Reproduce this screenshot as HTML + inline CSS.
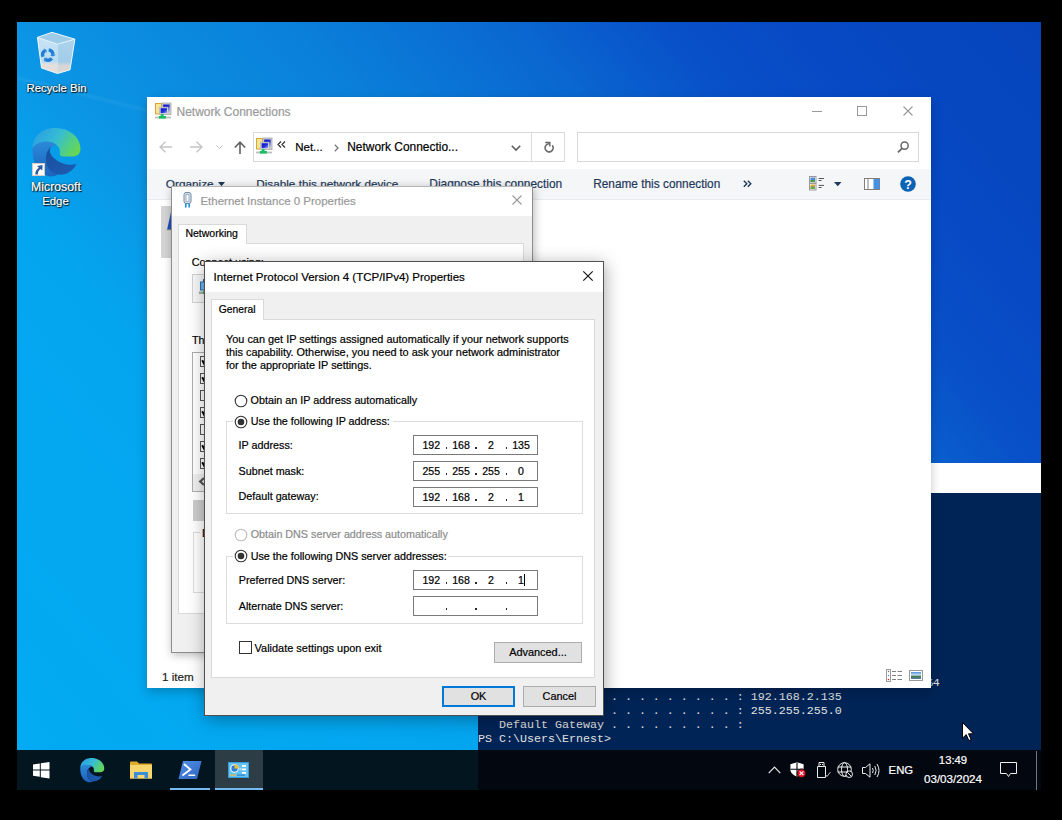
<!DOCTYPE html>
<html><head><meta charset="utf-8">
<style>
*{box-sizing:border-box;margin:0;padding:0}
html,body{width:1062px;height:820px;overflow:hidden;background:#000}
body{position:relative;font-family:"Liberation Sans",sans-serif;color:#000}
.a{position:absolute}
svg.a{overflow:visible}
.t{position:absolute;white-space:pre;line-height:1;-webkit-text-stroke:0.2px currentColor}
.dt{color:#fff;text-shadow:0 1px 2px #000,0 0 1px #000}
</style></head><body>
<div class="a" style="left:17px;top:22px;width:1024px;height:728px;overflow:hidden;background:linear-gradient(50deg,#02abf2 0%,#04a5ef 28%,#0b95e4 37%,#0a80da 54%,#0a66d0 68%,#0850c8 77%,#0749c4 85%,#0544ba 100%)"></div>
<svg class="a" style="left:17px;top:22px;overflow:hidden" width="200" height="120" viewBox="0 0 200 120"><defs><filter id="bl"><feGaussianBlur stdDeviation="1.2"/></filter></defs><path d="M0 56 L200 106" stroke="rgba(190,235,255,0.09)" stroke-width="2.5" filter="url(#bl)"/></svg>
<svg class="a" style="left:36px;top:31px;" width="42" height="44" viewBox="0 0 42 44">
<defs><linearGradient id="rbl" x1="0" y1="0" x2="0" y2="1"><stop offset="0" stop-color="#c9e4f5"/><stop offset="0.66" stop-color="#b9dbf1"/><stop offset="0.76" stop-color="#e2e0de"/><stop offset="1" stop-color="#e9ddd6"/></linearGradient>
<linearGradient id="rbr" x1="0" y1="0" x2="0" y2="1"><stop offset="0" stop-color="#acd3ec"/><stop offset="0.66" stop-color="#a2cce8"/><stop offset="0.76" stop-color="#d6d6d8"/><stop offset="1" stop-color="#e0d6d0"/></linearGradient></defs>
<path d="M1.4 6.4 L21.5 13.2 L21.5 42.5 L5.5 37Z" fill="url(#rbl)"/>
<path d="M21.5 13.2 L38.9 8.2 L34 38.8 L21.5 42.5Z" fill="url(#rbr)"/>
<path d="M1.4 6.4 L16 1.3 L38.9 8.2 L21.5 13.2Z" fill="#9dcbe8"/>
<path d="M1.4 6.4 L16 1.3 L38.9 8.2 L21.5 13.2Z M1.4 6.4 L5.5 37 L21.5 42.5 L34 38.8 L38.9 8.2 " fill="none" stroke="#eef7fc" stroke-width="1" stroke-linejoin="round"/><path d="M21.5 13.5 V42" stroke="#e4f1fa" stroke-width="0.6"/>
<g transform="translate(11.8 24) scale(1.12)"><path d="M0.80 -4.53 A4.6 4.6 0 0 1 4.60 -0.16" fill="none" stroke="#1f7fd8" stroke-width="3"/><path d="M3.52 2.96 A4.6 4.6 0 0 1 -2.16 4.06" fill="none" stroke="#1f7fd8" stroke-width="3"/><path d="M-4.32 1.57 A4.6 4.6 0 0 1 -2.44 -3.90" fill="none" stroke="#1f7fd8" stroke-width="3"/><path d="M7.20 -0.25 L4.42 1.27 L2.00 -0.07Z" fill="#1f7fd8"/><path d="M-3.38 6.36 L-3.31 3.20 L-0.94 1.77Z" fill="#1f7fd8"/><path d="M-3.82 -6.11 L-1.11 -4.46 L-1.06 -1.70Z" fill="#1f7fd8"/></g>
</svg>
<div class="t" style="left:-43.5px;width:200px;text-align:center;top:83.00px;font-size:11.4px;color:#fff;text-shadow:0 0 2px #000,1px 1px 1px rgba(0,0,0,.9)">Recycle Bin</div>
<svg class="a" style="left:30px;top:126px;" width="52" height="52" viewBox="0 0 52 52">
<defs>
<linearGradient id="eg1" x1="0" y1="0.3" x2="1" y2="0.7"><stop offset="0" stop-color="#2b9fe2"/><stop offset="0.45" stop-color="#35bcd4"/><stop offset="0.8" stop-color="#55d07c"/><stop offset="1" stop-color="#6ad650"/></linearGradient>
<linearGradient id="eg2" x1="0" y1="0" x2="0" y2="1"><stop offset="0" stop-color="#2c8ad8"/><stop offset="1" stop-color="#1b63bd"/></linearGradient>
<linearGradient id="eg3" x1="0" y1="0" x2="1" y2="1"><stop offset="0" stop-color="#1a4f9e"/><stop offset="1" stop-color="#1d5cb2"/></linearGradient>
</defs>
<path d="M2.5 22 C3 9 13 2 25.5 2 C39 2 50.5 11 50.5 23 C50.5 28 47 30.5 42 30.5 L33 30.5 C30.5 30.5 29.5 29 29.8 27.5 C30.5 24 29 20.5 26 18.5 C20 14 8 15 2.5 22 Z" fill="url(#eg1)"/>
<path d="M2.5 22 C8 14.5 20 13.5 26 18.5 L21.9 20.6 C17 23 15.5 29 15.9 35.5 C16.5 42 21 47 28.5 48.6 C25 50.2 22.5 50.8 20 50.5 C9 48.5 2 38 2.5 22 Z" fill="url(#eg2)"/>
<path d="M21.9 20.6 C17 23 15.5 29 15.9 35.5 C16.5 42 21 47.5 28.5 48.6 C36 49.5 43 45 46.6 37.7 C43 39 39 39 37 38.5 C29 37 22 32 20 26.5 C19.3 24 20 22 21.9 20.6 Z" fill="url(#eg3)"/>
</svg>
<div class="a" style="left:32px;top:163px;width:13px;height:13px;background:#fff;border:1px solid #d8cbbd"></div>
<svg class="a" style="left:33px;top:164px;" width="11" height="11" viewBox="0 0 11 11"><path d="M2.3 10.6 C2.2 7.2 3.6 5 5.9 3.7 L4 1.9 L9.6 1 L9.3 6.6 L7.5 4.9 C5.9 6 4.7 7.8 4.9 10.6 Z" fill="#2b5aa0"/></svg>
<div class="t" style="left:-44px;width:200px;text-align:center;top:181.00px;font-size:12.3px;color:#fff;text-shadow:0 0 2px #000,1px 1px 1px rgba(0,0,0,.9)">Microsoft</div>
<div class="t" style="left:-44.5px;width:200px;text-align:center;top:196.00px;font-size:11.4px;color:#fff;text-shadow:0 0 2px #000,1px 1px 1px rgba(0,0,0,.9)">Edge</div>
<div class="a" style="left:478px;top:463px;width:563px;height:30px;background:#fff"></div>
<div class="a" style="left:478px;top:493px;width:563px;height:257px;background:#012456"></div>
<div class="t" style="left:478px;top:677.62px;font-family:'Liberation Mono',monospace;font-size:11.67px;color:#e0e0e0;-webkit-text-stroke:0">   Link-local IPv6 Address . . . . . : fe80::c1d2:e3f4:a5b6:c7d8%4</div>
<div class="t" style="left:478px;top:691.62px;font-family:'Liberation Mono',monospace;font-size:11.67px;color:#e0e0e0;-webkit-text-stroke:0">   IPv4 Address. . . . . . . . . . . : 192.168.2.135</div>
<div class="t" style="left:478px;top:705.62px;font-family:'Liberation Mono',monospace;font-size:11.67px;color:#e0e0e0;-webkit-text-stroke:0">   Subnet Mask . . . . . . . . . . . : 255.255.255.0</div>
<div class="t" style="left:478px;top:719.62px;font-family:'Liberation Mono',monospace;font-size:11.67px;color:#e0e0e0;-webkit-text-stroke:0">   Default Gateway . . . . . . . . . :</div>
<div class="t" style="left:478px;top:733.62px;font-family:'Liberation Mono',monospace;font-size:11.67px;color:#e0e0e0;-webkit-text-stroke:0">PS C:\Users\Ernest&gt;</div>
<div class="a" style="left:147px;top:97px;width:784px;height:591px;background:#fff;box-shadow:0 4px 10px rgba(0,0,0,.22)"></div>
<svg class="a" style="left:155px;top:103px;" width="16" height="16" viewBox="0 0 16 16">
<defs><linearGradient id="scr" x1="0" y1="0" x2="1" y2="1"><stop offset="0" stop-color="#0a10c8"/><stop offset="0.55" stop-color="#2030d8"/><stop offset="1" stop-color="#a8b8f0"/></linearGradient></defs>
<rect x="0.5" y="0.5" width="6" height="10.5" fill="#f7e596" stroke="#d4a738" stroke-width="1"/>
<rect x="7" y="0" width="9" height="11.5" fill="#cfcfcf" stroke="#a8a8a8" stroke-width="0.8"/>
<rect x="8.2" y="1.5" width="6.5" height="7" fill="url(#scr)"/>
<rect x="4.6" y="4.2" width="8.4" height="7" fill="#e6e6e6" stroke="#b5b5b5" stroke-width="0.8"/>
<rect x="5.6" y="5.2" width="6.4" height="5" fill="url(#scr)"/>
<rect x="0" y="13.6" width="16" height="1.8" fill="#bdbdbd"/>
<rect x="5.6" y="11.2" width="3" height="2.4" fill="#14c064"/>
<rect x="3.9" y="13" width="7" height="2.6" fill="#14c064"/>
</svg>
<div class="t" style="left:176.5px;top:106.00px;font-size:12px;color:#999;">Network Connections</div>
<div class="a" style="left:812px;top:111px;width:10px;height:1px;background:#999"></div>
<div class="a" style="left:857px;top:106px;width:10px;height:10px;border:1px solid #999"></div>
<svg class="a" style="left:903px;top:106px;" width="10" height="10" viewBox="0 0 10 10"><path d="M0.5 0.5 L9.5 9.5 M9.5 0.5 L0.5 9.5" stroke="#999" stroke-width="1.1"/></svg>
<svg class="a" style="left:159px;top:141px;" width="14" height="12" viewBox="0 0 14 12"><path d="M1 6 H13 M6.5 0.8 L1 6 L6.5 11.2" fill="none" stroke="#c4c4c4" stroke-width="1.3"/></svg>
<svg class="a" style="left:189px;top:141px;" width="14" height="12" viewBox="0 0 14 12"><path d="M13 6 H1 M7.5 0.8 L13 6 L7.5 11.2" fill="none" stroke="#c4c4c4" stroke-width="1.3"/></svg>
<svg class="a" style="left:216px;top:145px;" width="7" height="4" viewBox="0 0 7 4"><path d="M0.5 0.5 L3.5 3.5 L6.5 0.5" fill="none" stroke="#c4c4c4" stroke-width="1"/></svg>
<svg class="a" style="left:234px;top:141px;" width="12" height="13" viewBox="0 0 12 13"><path d="M6 13 V1.5 M0.8 6.5 L6 1.2 L11.2 6.5" fill="none" stroke="#606060" stroke-width="1.6"/></svg>
<div class="a" style="left:253px;top:132px;width:312px;height:30px;border:1px solid #d9d9d9;background:#fff"></div>
<div class="a" style="left:531px;top:133px;width:1px;height:28px;background:#d9d9d9"></div>
<svg class="a" style="left:256px;top:138px;" width="16" height="16" viewBox="0 0 16 16">
<defs><linearGradient id="scr" x1="0" y1="0" x2="1" y2="1"><stop offset="0" stop-color="#0a10c8"/><stop offset="0.55" stop-color="#2030d8"/><stop offset="1" stop-color="#a8b8f0"/></linearGradient></defs>
<rect x="0.5" y="0.5" width="6" height="10.5" fill="#f7e596" stroke="#d4a738" stroke-width="1"/>
<rect x="7" y="0" width="9" height="11.5" fill="#cfcfcf" stroke="#a8a8a8" stroke-width="0.8"/>
<rect x="8.2" y="1.5" width="6.5" height="7" fill="url(#scr)"/>
<rect x="4.6" y="4.2" width="8.4" height="7" fill="#e6e6e6" stroke="#b5b5b5" stroke-width="0.8"/>
<rect x="5.6" y="5.2" width="6.4" height="5" fill="url(#scr)"/>
<rect x="0" y="13.6" width="16" height="1.8" fill="#bdbdbd"/>
<rect x="5.6" y="11.2" width="3" height="2.4" fill="#14c064"/>
<rect x="3.9" y="13" width="7" height="2.6" fill="#14c064"/>
</svg>
<svg class="a" style="left:277px;top:141px;" width="9" height="7" viewBox="0 0 9 7"><path d="M4 0.5 L1 3.5 L4 6.5 M8 0.5 L5 3.5 L8 6.5" fill="none" stroke="#333" stroke-width="1.2"/></svg>
<div class="t" style="left:295.2px;top:142.00px;font-size:11.5px;color:#000;">Net...</div>
<svg class="a" style="left:334px;top:144px;" width="5" height="8" viewBox="0 0 5 8"><path d="M0.8 0.8 L4 4 L0.8 7.2" fill="none" stroke="#777" stroke-width="1.3"/></svg>
<div class="t" style="left:347.2px;top:142.00px;font-size:11.95px;color:#000;">Network Connectio...</div>
<svg class="a" style="left:511px;top:145px;" width="10" height="6" viewBox="0 0 10 6"><path d="M0.8 0.8 L5 5 L9.2 0.8" fill="none" stroke="#5f5f5f" stroke-width="1.6"/></svg>
<svg class="a" style="left:543px;top:142px;" width="12" height="12" viewBox="0 0 12 12"><path d="M9.3 3.2 A4.1 4.1 0 1 1 6.2 1.7" fill="none" stroke="#6a6a6a" stroke-width="1.6"/><path d="M2.2 0.5 H6.8 V4.5" fill="none" stroke="#6a6a6a" stroke-width="1.5"/></svg>
<div class="a" style="left:577px;top:132px;width:342px;height:30px;border:1px solid #d9d9d9;background:#fff"></div>
<svg class="a" style="left:897px;top:141px;" width="12" height="12" viewBox="0 0 12 12"><circle cx="7.6" cy="4.6" r="3.6" fill="none" stroke="#666" stroke-width="1.5"/><path d="M5 7.4 L1 11.4" stroke="#666" stroke-width="1.8"/></svg>
<div class="a" style="left:147px;top:169px;width:784px;height:31px;background:#f5f6f7;border-bottom:1px solid #e8ebef"></div>
<div class="t" style="left:165.8px;top:179.00px;font-size:11.8px;color:#1e395b;">Organize</div>
<svg class="a" style="left:218px;top:182px;" width="8" height="5" viewBox="0 0 8 5"><path d="M0 0 H7 L3.5 4.2Z" fill="#1e395b"/></svg>
<div class="t" style="left:256.3px;top:178.00px;font-size:11.72px;color:#1e395b;">Disable this network device</div>
<div class="t" style="left:429.3px;top:179.00px;font-size:11.9px;color:#1e395b;">Diagnose this connection</div>
<div class="t" style="left:593.2px;top:179.00px;font-size:11.85px;color:#1e395b;">Rename this connection</div>
<svg class="a" style="left:743px;top:180px;" width="9" height="8" viewBox="0 0 9 8"><path d="M0.8 0.8 L3.8 3.8 L0.8 6.8 M4.8 0.8 L7.8 3.8 L4.8 6.8" fill="none" stroke="#1e395b" stroke-width="1.4"/></svg>
<svg class="a" style="left:809px;top:176px;" width="16" height="15" viewBox="0 0 16 15"><rect x="0.5" y="0.5" width="6.5" height="6.5" fill="#fff" stroke="#999"/><rect x="1.5" y="1.5" width="4.5" height="4.5" fill="#4b8bd6"/><rect x="1.5" y="4" width="4.5" height="2" fill="#4f9a4f"/>
    <rect x="0.5" y="7.5" width="6.5" height="6.5" fill="#fff" stroke="#999"/><rect x="1.5" y="8.5" width="4.5" height="4.5" fill="#d9a640"/><rect x="1.5" y="10.5" width="4.5" height="2.5" fill="#6aa84f"/>
    <path d="M9.6 2.5 H15 M9.6 4.5 H12.5 M9.6 9.4 H15 M9.6 11.5 H12.5" stroke="#555" stroke-width="1"/></svg>
<svg class="a" style="left:834px;top:182px;" width="8" height="5" viewBox="0 0 8 5"><path d="M0 0 H7.5 L3.75 4.3Z" fill="#1e395b"/></svg>
<svg class="a" style="left:864px;top:178px;" width="16" height="12" viewBox="0 0 16 12"><rect x="0.5" y="0.5" width="15" height="11" fill="#fff" stroke="#808080"/><rect x="3.5" y="1" width="1" height="10" fill="#808080"/><rect x="9.5" y="1" width="6" height="10" fill="#4a90e2"/></svg>
<svg class="a" style="left:900px;top:176px;" width="16" height="16" viewBox="0 0 16 16"><circle cx="8" cy="8" r="7.8" fill="#0b63b6"/><text x="8" y="12.6" text-anchor="middle" font-family="Liberation Sans" font-weight="bold" font-size="12.5" fill="#fff">?</text></svg>
<div class="a" style="left:161px;top:206px;width:12px;height:52px;background:#d4d4d4"></div>
<svg class="a" style="left:166px;top:211px;" width="8" height="20" viewBox="0 0 8 20"><path d="M1 19 L5 1 L8 1 L8 19Z" fill="#1e4fc2"/><path d="M0.5 19 L8 19" stroke="#c9b38a" stroke-width="1"/></svg>
<div class="t" style="left:162px;top:671.00px;font-size:11.7px;color:#1e1e1e;">1 item</div>
<svg class="a" style="left:886px;top:669px;" width="17" height="13" viewBox="0 0 17 13"><rect x="0.5" y="0.5" width="4" height="12" fill="#fff" stroke="#999"/>
    <circle cx="2.5" cy="2.5" r="0.7" fill="#666"/><circle cx="2.5" cy="6.5" r="0.7" fill="#4a8ef0"/><circle cx="2.5" cy="10.5" r="0.8" fill="#e02020"/>
    <path d="M6 2.5 H10 M11.5 2.5 H16 M6 6.5 H10 M11.5 6.5 H16 M6 10.5 H10 M11.5 10.5 H16" stroke="#808080" stroke-width="1.2"/></svg>
<svg class="a" style="left:909px;top:670px;" width="14" height="11" viewBox="0 0 14 11"><rect x="0.5" y="0.5" width="13" height="10" fill="#fff" stroke="#999"/>
    <defs><linearGradient id="lv" x1="0" y1="0" x2="0" y2="1"><stop offset="0" stop-color="#4b8fe0"/><stop offset="0.45" stop-color="#cfe2f0"/><stop offset="0.6" stop-color="#3f7a4a"/><stop offset="1" stop-color="#5a7fa8"/></linearGradient></defs>
    <rect x="2" y="2" width="10" height="7" fill="url(#lv)"/></svg>
<div class="a" style="left:171px;top:186px;width:362px;height:467px;background:#f0f0f0;border:1px solid #8d8d8d;border-top-color:#b5b5b5;box-shadow:1px 2px 9px rgba(0,0,0,.28)"></div>
<div class="a" style="left:172px;top:187px;width:360px;height:29px;background:#fff"></div>
<svg class="a" style="left:183px;top:192px;" width="9" height="16" viewBox="0 0 9 16"><rect x="1" y="0.5" width="7" height="11" rx="2" fill="#dfe6ee" stroke="#6f8aa6" stroke-width="1"/>
    <rect x="3" y="2.5" width="3" height="7" fill="#fff" stroke="#8aa0b8" stroke-width="0.8"/>
    <rect x="2" y="11.5" width="1.6" height="4" fill="#1d8fe0"/><rect x="5.4" y="11.5" width="1.6" height="4" fill="#1d8fe0"/></svg>
<div class="t" style="left:200.4px;top:196.00px;font-size:11.5px;color:#999;">Ethernet Instance 0 Properties</div>
<svg class="a" style="left:512px;top:195px;" width="10" height="10" viewBox="0 0 10 10"><path d="M0.5 0.5 L9.5 9.5 M9.5 0.5 L0.5 9.5" stroke="#999" stroke-width="1.1"/></svg>
<div class="a" style="left:178px;top:243px;width:346px;height:371px;background:#fff;border:1px solid #d9d9d9"></div>
<div class="a" style="left:178px;top:224px;width:69px;height:20px;background:#fff;border:1px solid #d9d9d9;border-bottom:none"></div>
<div class="t" style="left:185.4px;top:228.00px;font-size:10.5px;color:#000;">Networking</div>
<div class="t" style="left:191.8px;top:257.00px;font-size:10.8px;color:#000;">Connect using:</div>
<div class="a" style="left:192px;top:274px;width:320px;height:29px;background:#f7f7f7;border:1px solid #d2d2d2"></div>
<svg class="a" style="left:199px;top:280px;" width="12" height="17" viewBox="0 0 12 17"><rect x="1.5" y="2" width="8" height="8" fill="#6db6ec" stroke="#2a6fae" stroke-width="1"/><rect x="4" y="-1" width="3" height="3" fill="#2a5f8e"/><rect x="0" y="11.5" width="12" height="2.5" fill="#b0a8a8"/><rect x="4" y="11" width="2.5" height="3" fill="#2cb54a"/></svg>
<div class="t" style="left:192px;top:335.00px;font-size:10.8px;color:#000;">This connection uses the following items:</div>
<div class="a" style="left:192px;top:352px;width:320px;height:140px;background:#fff;border:1px solid #adadad"></div>
<div class="a" style="left:200px;top:356px;width:11px;height:11px;background:#fff;border:1px solid #555"></div>
<svg class="a" style="left:200px;top:356px;" width="11" height="11" viewBox="0 0 11 11"><path d="M2.2 4.3 L4.6 8.6 L9 2" fill="none" stroke="#000" stroke-width="2"/></svg>
<div class="a" style="left:200px;top:373px;width:11px;height:11px;background:#fff;border:1px solid #555"></div>
<svg class="a" style="left:200px;top:373px;" width="11" height="11" viewBox="0 0 11 11"><path d="M2.2 4.3 L4.6 8.6 L9 2" fill="none" stroke="#000" stroke-width="2"/></svg>
<div class="a" style="left:200px;top:390px;width:11px;height:11px;background:#fff;border:1px solid #555"></div>
<div class="a" style="left:200px;top:407px;width:11px;height:11px;background:#fff;border:1px solid #555"></div>
<svg class="a" style="left:200px;top:407px;" width="11" height="11" viewBox="0 0 11 11"><path d="M2.2 4.3 L4.6 8.6 L9 2" fill="none" stroke="#000" stroke-width="2"/></svg>
<div class="a" style="left:200px;top:424px;width:11px;height:11px;background:#fff;border:1px solid #555"></div>
<div class="a" style="left:200px;top:441px;width:11px;height:11px;background:#fff;border:1px solid #555"></div>
<svg class="a" style="left:200px;top:441px;" width="11" height="11" viewBox="0 0 11 11"><path d="M2.2 4.3 L4.6 8.6 L9 2" fill="none" stroke="#000" stroke-width="2"/></svg>
<div class="a" style="left:200px;top:458px;width:11px;height:11px;background:#fff;border:1px solid #555"></div>
<svg class="a" style="left:200px;top:458px;" width="11" height="11" viewBox="0 0 11 11"><path d="M2.2 4.3 L4.6 8.6 L9 2" fill="none" stroke="#000" stroke-width="2"/></svg>
<div class="a" style="left:193px;top:474px;width:318px;height:17px;background:#f0f0f0"></div>
<svg class="a" style="left:198px;top:477px;" width="8" height="9" viewBox="0 0 8 9"><path d="M6 1 L2.2 4.5 L6 8" fill="none" stroke="#555" stroke-width="2.3"/></svg>
<div class="a" style="left:193px;top:500px;width:90px;height:21px;background:#cccccc;border:1px solid #cccccc"></div>
<div class="a" style="left:193px;top:532px;width:318px;height:61px;border:1px solid #dcdcdc"></div>
<div class="a" style="left:200px;top:527px;width:10px;height:10px;background:#fff"></div>
<div class="t" style="left:202px;top:528.00px;font-size:10.8px;color:#000;">D</div>
<div class="a" style="left:204px;top:261px;width:400px;height:455px;background:#f0f0f0;border:1px solid #505050;box-shadow:1px 3px 16px rgba(0,0,0,.34)"></div>
<div class="a" style="left:205px;top:262px;width:398px;height:30px;background:#fff"></div>
<div class="t" style="left:213.6px;top:272.00px;font-size:11.5px;color:#000;">Internet Protocol Version 4 (TCP/IPv4) Properties</div>
<svg class="a" style="left:583px;top:271px;" width="10" height="10" viewBox="0 0 10 10"><path d="M0.3 0.3 L9.7 9.7 M9.7 0.3 L0.3 9.7" stroke="#111" stroke-width="1.15"/></svg>
<div class="a" style="left:211px;top:319px;width:384px;height:359px;background:#fff;border:1px solid #d9d9d9"></div>
<div class="a" style="left:211px;top:299px;width:53px;height:21px;background:#fff;border:1px solid #d9d9d9;border-bottom:none"></div>
<div class="t" style="left:218.8px;top:305.00px;font-size:10.3px;color:#000;">General</div>
<div class="t" style="left:226px;top:334.00px;font-size:10.9px;color:#000;">You can get IP settings assigned automatically if your network supports</div>
<div class="t" style="left:226px;top:347.00px;font-size:10.9px;color:#000;">this capability. Otherwise, you need to ask your network administrator</div>
<div class="t" style="left:226px;top:360.00px;font-size:10.9px;color:#000;">for the appropriate IP settings.</div>
<svg class="a" style="left:234.4px;top:393.5px;" width="14" height="14" viewBox="0 0 14 14"><circle cx="7" cy="7" r="5.8" fill="#fff" stroke="#333" stroke-width="1.1"/></svg>
<div class="t" style="left:250.6px;top:395.00px;font-size:10.75px;color:#000;">Obtain an IP address automatically</div>
<div class="a" style="left:226px;top:421px;width:357px;height:93px;border:1px solid #dcdcdc"></div>
<div class="a" style="left:233px;top:413px;width:160px;height:16px;background:#fff"></div>
<svg class="a" style="left:234.4px;top:414.5px;" width="14" height="14" viewBox="0 0 14 14"><circle cx="7" cy="7" r="5.8" fill="#fff" stroke="#333" stroke-width="1.1"/><circle cx="7" cy="7" r="3.3" fill="#333"/></svg>
<div class="t" style="left:250.8px;top:416.00px;font-size:10.75px;color:#000;">Use the following IP address:</div>
<div class="t" style="left:238.6px;top:440.00px;font-size:10.75px;color:#000;">IP address:</div>
<div class="t" style="left:238.6px;top:466.00px;font-size:10.75px;color:#000;">Subnet mask:</div>
<div class="t" style="left:238.6px;top:491.00px;font-size:10.75px;color:#000;">Default gateway:</div>
<div class="a" style="left:413px;top:435px;width:125px;height:20px;background:#fff;border:1px solid #7a7a7a"></div>
<div class="t" style="left:331.3px;width:200px;text-align:center;top:440.00px;font-size:10.6px;color:#000;">192</div>
<div class="t" style="left:361px;width:200px;text-align:center;top:440.00px;font-size:10.6px;color:#000;">168</div>
<div class="t" style="left:391px;width:200px;text-align:center;top:440.00px;font-size:10.6px;color:#000;">2</div>
<div class="t" style="left:421px;width:200px;text-align:center;top:440.00px;font-size:10.6px;color:#000;">135</div>
<div class="a" style="left:445.5px;top:447.4px;width:1.5px;height:1.5px;background:#2a2a2a"></div>
<div class="a" style="left:475.40000000000003px;top:447.4px;width:1.5px;height:1.5px;background:#2a2a2a"></div>
<div class="a" style="left:505.5px;top:447.4px;width:1.5px;height:1.5px;background:#2a2a2a"></div>
<div class="a" style="left:413px;top:461px;width:125px;height:20px;background:#fff;border:1px solid #7a7a7a"></div>
<div class="t" style="left:331.3px;width:200px;text-align:center;top:466.00px;font-size:10.6px;color:#000;">255</div>
<div class="t" style="left:361px;width:200px;text-align:center;top:466.00px;font-size:10.6px;color:#000;">255</div>
<div class="t" style="left:391px;width:200px;text-align:center;top:466.00px;font-size:10.6px;color:#000;">255</div>
<div class="t" style="left:421px;width:200px;text-align:center;top:466.00px;font-size:10.6px;color:#000;">0</div>
<div class="a" style="left:445.5px;top:473.4px;width:1.5px;height:1.5px;background:#2a2a2a"></div>
<div class="a" style="left:475.40000000000003px;top:473.4px;width:1.5px;height:1.5px;background:#2a2a2a"></div>
<div class="a" style="left:505.5px;top:473.4px;width:1.5px;height:1.5px;background:#2a2a2a"></div>
<div class="a" style="left:413px;top:487px;width:125px;height:20px;background:#fff;border:1px solid #7a7a7a"></div>
<div class="t" style="left:331.3px;width:200px;text-align:center;top:492.00px;font-size:10.6px;color:#000;">192</div>
<div class="t" style="left:361px;width:200px;text-align:center;top:492.00px;font-size:10.6px;color:#000;">168</div>
<div class="t" style="left:391px;width:200px;text-align:center;top:492.00px;font-size:10.6px;color:#000;">2</div>
<div class="t" style="left:421px;width:200px;text-align:center;top:492.00px;font-size:10.6px;color:#000;">1</div>
<div class="a" style="left:445.5px;top:499.4px;width:1.5px;height:1.5px;background:#2a2a2a"></div>
<div class="a" style="left:475.40000000000003px;top:499.4px;width:1.5px;height:1.5px;background:#2a2a2a"></div>
<div class="a" style="left:505.5px;top:499.4px;width:1.5px;height:1.5px;background:#2a2a2a"></div>
<svg class="a" style="left:234.4px;top:527.5px;" width="14" height="14" viewBox="0 0 14 14"><circle cx="7" cy="7" r="5.8" fill="#fff" stroke="#bcbcbc" stroke-width="1.1"/></svg>
<div class="t" style="left:250.7px;top:529.00px;font-size:10.75px;color:#8c8c8c;">Obtain DNS server address automatically</div>
<div class="a" style="left:226px;top:556px;width:357px;height:68px;border:1px solid #dcdcdc"></div>
<div class="a" style="left:233px;top:548px;width:215px;height:16px;background:#fff"></div>
<svg class="a" style="left:234.4px;top:549px;" width="14" height="14" viewBox="0 0 14 14"><circle cx="7" cy="7" r="5.8" fill="#fff" stroke="#333" stroke-width="1.1"/><circle cx="7" cy="7" r="3.3" fill="#333"/></svg>
<div class="t" style="left:250.7px;top:551.00px;font-size:10.75px;color:#000;">Use the following DNS server addresses:</div>
<div class="t" style="left:238.8px;top:575.00px;font-size:10.75px;color:#000;">Preferred DNS server:</div>
<div class="t" style="left:238.8px;top:601.00px;font-size:10.75px;color:#000;">Alternate DNS server:</div>
<div class="a" style="left:413px;top:570px;width:125px;height:20px;background:#fff;border:1px solid #7a7a7a"></div>
<div class="t" style="left:331.3px;width:200px;text-align:center;top:575.00px;font-size:10.6px;color:#000;">192</div>
<div class="t" style="left:361px;width:200px;text-align:center;top:575.00px;font-size:10.6px;color:#000;">168</div>
<div class="t" style="left:391px;width:200px;text-align:center;top:575.00px;font-size:10.6px;color:#000;">2</div>
<div class="t" style="left:421px;width:200px;text-align:center;top:575.00px;font-size:10.6px;color:#000;">1</div>
<div class="a" style="left:445.5px;top:582.4px;width:1.5px;height:1.5px;background:#2a2a2a"></div>
<div class="a" style="left:475.40000000000003px;top:582.4px;width:1.5px;height:1.5px;background:#2a2a2a"></div>
<div class="a" style="left:505.5px;top:582.4px;width:1.5px;height:1.5px;background:#2a2a2a"></div>
<div class="a" style="left:524px;top:574px;width:1px;height:12px;background:#000"></div>
<div class="a" style="left:413px;top:596px;width:125px;height:20px;background:#fff;border:1px solid #7a7a7a"></div>
<div class="a" style="left:445.5px;top:608.4px;width:1.5px;height:1.5px;background:#2a2a2a"></div>
<div class="a" style="left:475.40000000000003px;top:608.4px;width:1.5px;height:1.5px;background:#2a2a2a"></div>
<div class="a" style="left:505.5px;top:608.4px;width:1.5px;height:1.5px;background:#2a2a2a"></div>
<div class="a" style="left:239px;top:641px;width:13px;height:13px;background:#fff;border:1px solid #333"></div>
<div class="t" style="left:254.6px;top:643.00px;font-size:10.95px;color:#000;">Validate settings upon exit</div>
<div class="a" style="left:494px;top:642px;width:88px;height:21px;background:#e1e1e1;border:1px solid #adadad"></div>
<div class="t" style="left:438px;width:200px;text-align:center;top:647.00px;font-size:10.9px;color:#000;">Advanced...</div>
<div class="a" style="left:442px;top:686px;width:73px;height:21px;background:#e1e1e1;border:2px solid #0078d7"></div>
<div class="t" style="left:378.5px;width:200px;text-align:center;top:691.00px;font-size:10.9px;color:#000;">OK</div>
<div class="a" style="left:523px;top:686px;width:73px;height:21px;background:#e1e1e1;border:1px solid #adadad"></div>
<div class="t" style="left:459.5px;width:200px;text-align:center;top:691.00px;font-size:10.9px;color:#000;">Cancel</div>
<div class="a" style="left:17px;top:750px;width:461px;height:40px;background:#03161f"></div>
<div class="a" style="left:478px;top:750px;width:563px;height:40px;background:#03070f"></div>
<svg class="a" style="left:33px;top:762px;" width="17" height="17" viewBox="0 0 17 17"><path d="M0 2.4 L6.8 1.4 V7.6 H0Z M7.8 1.25 L16.5 0 V7.6 H7.8Z M0 8.6 H6.8 V14.8 L0 13.8Z M7.8 8.6 H16.5 V16.5 L7.8 15.2Z" fill="#fff"/></svg>
<svg class="a" style="left:79px;top:757px;" width="26" height="26" viewBox="0 0 26 26"><defs>
<linearGradient id="te1" x1="0" y1="0.3" x2="1" y2="0.7"><stop offset="0" stop-color="#2b9fe2"/><stop offset="0.45" stop-color="#35bcd4"/><stop offset="0.8" stop-color="#55d07c"/><stop offset="1" stop-color="#6ad650"/></linearGradient>
<linearGradient id="te2" x1="0" y1="0" x2="0" y2="1"><stop offset="0" stop-color="#2c8ad8"/><stop offset="1" stop-color="#1b63bd"/></linearGradient>
<linearGradient id="te3" x1="0" y1="0" x2="1" y2="1"><stop offset="0" stop-color="#1a4f9e"/><stop offset="1" stop-color="#1d5cb2"/></linearGradient></defs>
<g transform="scale(0.5)">
<path d="M2.5 22 C3 9 13 2 25.5 2 C39 2 50.5 11 50.5 23 C50.5 28 47 30.5 42 30.5 L33 30.5 C30.5 30.5 29.5 29 29.8 27.5 C30.5 24 29 20.5 26 18.5 C20 14 8 15 2.5 22 Z" fill="url(#te1)"/>
<path d="M2.5 22 C8 14.5 20 13.5 26 18.5 L21.9 20.6 C17 23 15.5 29 15.9 35.5 C16.5 42 21 47 28.5 48.6 C25 50.2 22.5 50.8 20 50.5 C9 48.5 2 38 2.5 22 Z" fill="url(#te2)"/>
<path d="M21.9 20.6 C17 23 15.5 29 15.9 35.5 C16.5 42 21 47.5 28.5 48.6 C36 49.5 43 45 46.6 37.7 C43 39 39 39 37 38.5 C29 37 22 32 20 26.5 C19.3 24 20 22 21.9 20.6 Z" fill="url(#te3)"/>
</g></svg>
<svg class="a" style="left:130px;top:761px;" width="22" height="18" viewBox="0 0 22 18"><path d="M0 1.5 Q0 0.5 1 0.5 H7 L9 2.5 H21 Q22 2.5 22 3.5 V17.5 H0Z" fill="#e3ad2c"/>
<rect x="0" y="4" width="22" height="13.5" fill="#f9d66f"/>
<path d="M4 17.5 V11 H18 V17.5 H14.5 V14 H7.5 V17.5Z" fill="#3d8ed8"/></svg>
<svg class="a" style="left:178px;top:761px;" width="24" height="18" viewBox="0 0 24 18"><defs><linearGradient id="psg" x1="0" y1="0" x2="1" y2="1"><stop offset="0" stop-color="#5391e8"/><stop offset="1" stop-color="#2d64c0"/></linearGradient></defs>
<path d="M5 0 H23.5 L19 18 H0.5Z" fill="url(#psg)"/>
<path d="M6.5 3.5 L12.5 8.5 L5 14" fill="none" stroke="#fff" stroke-width="1.8" stroke-linecap="round"/>
<path d="M11 14.3 H16.5" stroke="#fff" stroke-width="1.6" stroke-linecap="round"/></svg>
<div class="a" style="left:170px;top:788px;width:40px;height:2px;background:#76b9ed"></div>
<div class="a" style="left:215px;top:750px;width:48px;height:40px;background:#2d3d46"></div>
<div class="a" style="left:215px;top:788px;width:48px;height:2px;background:#76b9ed"></div>
<svg class="a" style="left:228px;top:762px;" width="21" height="16" viewBox="0 0 21 16"><rect x="0.5" y="0.5" width="20" height="15" fill="#64c3f2" stroke="#3a9ad8" stroke-width="1"/>
<circle cx="6.5" cy="6.5" r="4.2" fill="#fff"/><circle cx="6.5" cy="6.5" r="3.2" fill="#2a7fd0"/><path d="M6.5 6.5 V2.3 A4.2 4.2 0 0 1 10.7 6.5Z" fill="#f5b82e"/>
<rect x="14" y="3" width="4" height="1.8" fill="#fff"/><rect x="14" y="6.5" width="4" height="1.8" fill="#fff"/><rect x="14" y="10" width="4" height="1.8" fill="#fff"/>
<path d="M11.5 7 H13.5" stroke="#fff" stroke-width="1"/>
<rect x="2" y="12.5" width="6" height="1.2" fill="#f5b82e"/><rect x="9" y="12.5" width="8" height="1.2" fill="#2a7fd0"/></svg>
<svg class="a" style="left:768px;top:766px;" width="13" height="8" viewBox="0 0 13 8"><path d="M0.7 7.2 L6.5 1.2 L12.3 7.2" fill="none" stroke="#e6e6e6" stroke-width="1.2"/></svg>
<svg class="a" style="left:790px;top:762px;" width="16" height="16" viewBox="0 0 16 16"><path d="M7 0.3 L13.6 2.3 V7.5 C13.6 11 10.5 13.2 7 14.6 C3.5 13.2 0.4 11 0.4 7.5 V2.3Z" fill="#fff"/>
<path d="M7 0.5 V14.5 M0.4 7.2 H13.6" stroke="#03070f" stroke-width="1.1"/>
<circle cx="11.5" cy="11.3" r="4.3" fill="#e81123" stroke="#03070f" stroke-width="0.8"/><path d="M9.6 9.4 L13.4 13.2 M13.4 9.4 L9.6 13.2" stroke="#fff" stroke-width="1.2"/></svg>
<svg class="a" style="left:816px;top:762px;" width="15" height="16" viewBox="0 0 15 16"><path d="M1.5 4.5 H9.5 V15.5 H1.5Z" fill="none" stroke="#eee" stroke-width="1"/>
<path d="M3 0.5 H8 V4.5 H3Z" fill="none" stroke="#eee" stroke-width="1"/><rect x="4" y="2" width="1" height="1" fill="#eee"/><rect x="6" y="2" width="1" height="1" fill="#eee"/>
<path d="M9.5 12.5 L11 14.5 L14.5 10" fill="none" stroke="#bbb" stroke-width="1"/></svg>
<svg class="a" style="left:837px;top:762px;" width="16" height="16" viewBox="0 0 16 16"><g fill="none" stroke="#eee" stroke-width="1"><circle cx="7.5" cy="7.5" r="6.8"/><ellipse cx="7.5" cy="7.5" rx="3" ry="6.8"/><path d="M0.7 5 H14.3 M0.7 10 H11"/></g>
<circle cx="12.2" cy="12.2" r="3.3" fill="#03070f" stroke="#eee" stroke-width="1"/><path d="M10.2 10.2 L14.2 14.2" stroke="#eee" stroke-width="1"/></svg>
<svg class="a" style="left:862px;top:763px;" width="17" height="15" viewBox="0 0 17 15"><path d="M0.5 4.5 H3.5 L8 0.8 V14.2 L3.5 10.5 H0.5Z" fill="none" stroke="#eee" stroke-width="1"/>
<path d="M10.5 5 Q12 7.5 10.5 10 M12.8 3 Q15.5 7.5 12.8 12 M15 1 Q19 7.5 15 14" fill="none" stroke="#eee" stroke-width="1"/></svg>
<div class="t" style="left:888.6px;top:765.00px;font-size:11.3px;color:#fff;">ENG</div>
<div class="t" style="left:853px;width:200px;text-align:center;top:755.00px;font-size:11.3px;color:#fff;">13:49</div>
<div class="t" style="left:853px;width:200px;text-align:center;top:773.00px;font-size:11.6px;color:#fff;">03/03/2024</div>
<svg class="a" style="left:1000px;top:762px;" width="17" height="16" viewBox="0 0 17 16"><path d="M0.5 0.5 H16.5 V11.5 H10.5 L8.5 14.5 L6.5 11.5 H0.5Z" fill="none" stroke="#eee" stroke-width="1"/></svg>
<div class="a" style="left:1036px;top:751px;width:1px;height:39px;background:#6a7a84"></div>
<svg class="a" style="left:962px;top:722px;" width="13" height="20" viewBox="0 0 13 20"><path d="M0.5 0.5 V16.2 L4.2 12.6 L6.9 18.6 L9.1 17.6 L6.5 11.8 L11.5 11.8Z" fill="#fff" stroke="#000" stroke-width="1" stroke-linejoin="miter"/></svg>
</body></html>
